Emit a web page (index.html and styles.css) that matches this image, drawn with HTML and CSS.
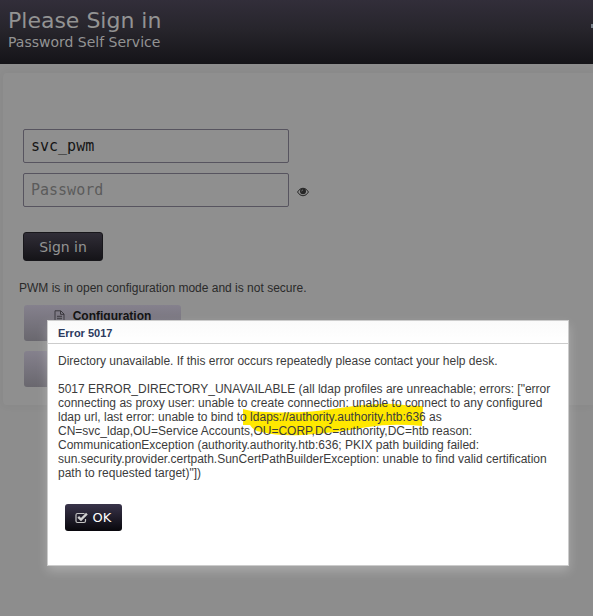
FILE: index.html
```html
<!DOCTYPE html>
<html lang="en">
<head>
<meta charset="utf-8">
<title>Password Self Service</title>
<link rel="stylesheet" href="styles.css">
</head>
<body>
<header class="header">
  <h1 class="title">Please Sign in</h1>
  <p class="subtitle">Password Self Service</p>
  <span class="header-mark"></span>
</header>
<main class="panel">
  <form class="form">
    <input class="field" type="text" value="svc_pwm">
    <div class="row">
      <input class="field" type="text" placeholder="Password">
      <svg class="eye" viewBox="0 0 12 10"><path d="M.5 5Q2.6 1.2 6 1.2T11.5 5Q9.400 8.800 6 8.800T.5 5Z" fill="none" stroke="#262626" stroke-width="1"/><circle cx="6" cy="4.300" r="3" fill="#262626"/><path d="M4.600 4.400Q4.700 3 6 2.900" fill="none" stroke="#888" stroke-width=".7"/></svg>
    </div>
    <button class="btn signin" type="button">Sign in</button>
  </form>
  <p class="notice">PWM is in open configuration mode and is not secure.</p>
  <div class="links">
    <div class="link"><svg class="doc" viewBox="0 0 11 13"><path d="M1 .8H6.8L10 4V12.2H1ZM6.5 1V4.3H10M3 6.3H8M3 8.3H8M3 10.3H8" fill="none" stroke="#3a383e" stroke-width="1"/></svg><b>Configuration</b></div>
    <div class="link"></div>
  </div>
</main>
<section class="dialog">
  <h2 class="dialog-title">Error 5017</h2>
  <div class="dialog-body">
    <p>Directory unavailable. If this error occurs repeatedly please contact your help desk.</p>
    <p>5017 ERROR_DIRECTORY_UNAVAILABLE (all ldap profiles are unreachable; errors: ["error<br>connecting as proxy user: unable to create connection: unable to connect to any configured<br>ldap url, last error: unable to bind to ldaps://authority.authority.htb:636 as<br>CN=svc_ldap,OU=Service Accounts,OU=CORP,DC=authority,DC=htb reason:<br>CommunicationException (authority.authority.htb:636; PKIX path building failed:<br>sun.security.provider.certpath.SunCertPathBuilderException: unable to find valid certification<br>path to requested target)"])</p>
    <button class="btn ok" type="button"><svg class="check" viewBox="0 0 13 12"><path d="M9.500 1.500H2.500Q1 1.500 1 3V9Q1 10.500 2.500 10.500H9Q10.500 10.500 10.500 9V7" fill="none" stroke="#c4c4c4" stroke-width="1.2"/><path d="M3.200 4.800L6 7.500L11.900 1.700" fill="none" stroke="#d0d0d0" stroke-width="2.400"/></svg>OK</button>
  </div>
  <svg class="marker" viewBox="0 0 182 34"><path d="M1 6Q10 9 24 9Q60 11 98 5Q132 0 153 1Q168 3 181 3L180 23Q150 20 126 24Q92 30 60 32Q35 33 20 29Q11 28 8 22L1 22Z" fill="#ffe800"/></svg>
</section>
</body>
</html>
```
FILE: styles.css
```css
* { box-sizing: border-box; }
body {
  margin: 0;
  height: 616px;
  overflow: hidden;
  position: relative;
  background: #8d8d8d;
  font: 12px/14px "Liberation Sans", Arial, sans-serif;
  color: #3c3c3c;
}
.header {
  position: relative;
  height: 64px;
  padding: 7px 8px 0;
  background: linear-gradient(#322e3a, #27252c 45%, #151418);
  font-family: "DejaVu Sans", sans-serif;
  color: #939393;
}
.title { margin: 0; font-size: 22px; line-height: 27px; font-weight: 400; }
.subtitle { margin: 0; font-size: 14px; line-height: 17px; }
.header-mark {
  position: absolute;
  right: 0;
  top: 24px;
  width: 2px;
  height: 4px;
  background: #77808a;
}
.panel {
  margin: 9px 0 0 3px;
  height: 332px;
  padding: 56px 0 0 20px;
  border-radius: 4px 0 0 4px;
  background: #8f8f8f;
  box-shadow: 0 0 10px rgba(0, 0, 0, .05);
}
.form { display: flex; flex-direction: column; align-items: flex-start; gap: 10px; }
.row { display: flex; align-items: center; gap: 8px; }
.field {
  display: block;
  width: 266px;
  height: 34px;
  margin: 0;
  padding: 0 7px;
  border: 1px solid #57545f;
  border-radius: 2px;
  background: #8f8f8f;
  color: #151515;
  font: 15px "DejaVu Sans Mono", monospace;
}
.field::placeholder { color: #5b5b5b; opacity: 1; }
.eye { width: 12px; height: 10px; margin-top: 4px; }
.btn {
  display: flex;
  align-items: center;
  justify-content: center;
  margin: 0;
  padding: 0;
  border: 0;
  border-radius: 3px;
  font-family: "DejaVu Sans", sans-serif;
}
.signin {
  width: 80px;
  height: 29px;
  margin-top: 15px;
  border: 1px solid #18171b;
  background: linear-gradient(#302d37, #151418);
  color: #939393;
  font-size: 14px;
}
.notice { margin: 20px 0 0 -4px; font-size: 12px; line-height: 14px; color: #2a2a2a; }
.links { display: flex; flex-direction: column; gap: 10px; margin: 10px 0 0 1px; }
.link {
  display: flex;
  justify-content: center;
  gap: 8px;
  width: 157px;
  height: 36px;
  padding-top: 4px;
  border-radius: 3px;
  background: linear-gradient(#85818d, #69676e);
  color: #111;
}
.doc { width: 11px; height: 13px; margin-top: 1px; }
.dialog {
  position: absolute;
  left: 47px;
  top: 320px;
  width: 522px;
  height: 246px;
  border: 1px solid #ccc;
  background: #fff;
  box-shadow: 0 5px 10px rgba(255, 255, 255, .25);
}
.dialog-title {
  height: 23px;
  margin: 0;
  padding: 0 10px;
  border-bottom: 1px solid #ccc;
  background: linear-gradient(#fafafa, #fff);
  font-size: 11px;
  line-height: 25px;
  color: #2b3a5e;
}
.dialog-body { position: relative; z-index: 1; padding: 10px 10px 0; }
.dialog-body p { margin: 0 0 14px; white-space: nowrap; }
.ok {
  width: 57px;
  height: 27px;
  margin: 24px 0 0 7px;
  padding-right: 1px;
  gap: 5px;
  background: linear-gradient(#39344a, #08070c);
  color: #fff;
  font-size: 13px;
}
.check { width: 13px; height: 12px; }
.marker { position: absolute; left: 194px; top: 82px; width: 182px; height: 34px; }
```
